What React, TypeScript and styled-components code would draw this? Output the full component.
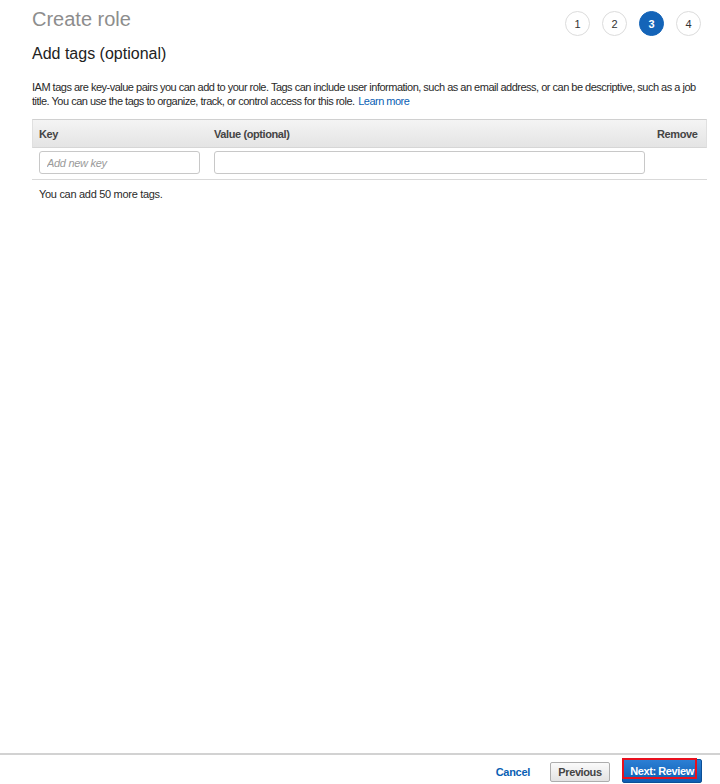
import React from "react";
import styled, { createGlobalStyle } from "styled-components";

const Global = createGlobalStyle`
  html, body { margin: 0; padding: 0; background: #fff; }
  body { font-family: "Liberation Sans", Arial, sans-serif; color: #333; }
  * { box-sizing: border-box; }
`;

const Page = styled.div`
  display: flex;
  flex-direction: column;
  min-height: 784px;
`;

const Main = styled.main`
  flex: 1;
  padding: 0 13px 0 32px;
`;

const HeaderRow = styled.div`
  display: flex;
  justify-content: space-between;
  align-items: flex-start;
`;

const Title = styled.h1`
  margin: 0;
  padding-top: 7px;
  font-size: 20px;
  line-height: 24px;
  font-weight: 400;
  color: #8d8d8d;
`;

const Steps = styled.ol`
  display: flex;
  gap: 12px;
  list-style: none;
  margin: 11px 6px 0 0;
  padding: 0;
`;

const Step = styled.li<{ $active?: boolean }>`
  width: 25px;
  height: 25px;
  border-radius: 50%;
  display: flex;
  align-items: center;
  justify-content: center;
  font-size: 11px;
  font-weight: ${(p) => (p.$active ? 700 : 400)};
  color: ${(p) => (p.$active ? "#fff" : "#333")};
  background: ${(p) => (p.$active ? "#1464b8" : "#fff")};
  border: 1px solid ${(p) => (p.$active ? "#1464b8" : "#dcdcdc")};
`;

const Subtitle = styled.h2`
  margin: 8px 0 0;
  font-size: 16px;
  line-height: 20px;
  font-weight: 400;
  color: #222;
`;

const Intro = styled.p`
  margin: 16px 0 0;
  font-size: 11px;
  line-height: 14px;
  letter-spacing: -0.5px;
  color: #2a2a2a;
`;

const Link = styled.a`
  color: #0b5fb4;
  text-decoration: none;
  margin-left: 1px;
`;

const Table = styled.div`
  margin-top: 11px;
  border-bottom: 1px solid #d9d9d9;
`;

const Grid = styled.div`
  display: grid;
  grid-template-columns: 175px 1fr 55px;
`;

const Head = styled(Grid)`
  height: 29px;
  align-items: center;
  background: linear-gradient(#f4f4f4, #e4e4e4);
  border-top: 1px solid #d0d0d0;
  border-left: 1px solid #e0e0e0;
  border-right: 1px solid #e0e0e0;
  border-bottom: 1px solid #d6d6d6;
`;

const HeadCell = styled.div<{ $right?: boolean }>`
  padding: 0 ${(p) => (p.$right ? "9px" : "7px")} 0 6px;
  text-align: ${(p) => (p.$right ? "right" : "left")};
  font-size: 11px;
  font-weight: 700;
  letter-spacing: -0.4px;
  color: #444;
`;

const Row = styled(Grid)`
  padding: 3px 0 5px;
`;

const Cell = styled.div`
  padding: 0 7px;
`;

const Input = styled.input`
  display: block;
  width: 100%;
  height: 23px;
  border: 1px solid #c8c8c8;
  border-radius: 3px;
  padding: 0 7px;
  font-family: "Liberation Sans", Arial, sans-serif;
  font-size: 11px;
  letter-spacing: -0.3px;
  color: #333;
  outline: none;
  &::placeholder {
    color: #9a9a9a;
    font-style: italic;
  }
`;

const Note = styled.p`
  margin: 7px 0 0 7px;
  font-size: 11px;
  line-height: 14px;
  letter-spacing: -0.3px;
  color: #2a2a2a;
`;

const Footer = styled.footer`
  display: flex;
  justify-content: flex-end;
  align-items: center;
  gap: 12px;
  height: 31px;
  padding: 0 18px 0 0;
  border-top: 2px solid #d2d2d2;
`;

const Cancel = styled.a`
  font-size: 11px;
  font-weight: 700;
  letter-spacing: -0.3px;
  color: #0b5fb4;
  margin-right: 8px;
  margin-top: 5px;
`;

const Button = styled.button<{ $primary?: boolean }>`
  position: relative;
  font-family: "Liberation Sans", Arial, sans-serif;
  font-size: 11px;
  font-weight: 700;
  letter-spacing: -0.4px;
  border-radius: 2px;
  cursor: pointer;
  height: ${(p) => (p.$primary ? "24px" : "20px")};
  width: ${(p) => (p.$primary ? "80px" : "60px")};
  padding: 0;
  margin-top: ${(p) => (p.$primary ? "3px" : "5px")};
  color: ${(p) => (p.$primary ? "#fff" : "#444")};
  background: ${(p) =>
    p.$primary ? "linear-gradient(#2c7fd4, #0d5eb3)" : "linear-gradient(#fafafa, #e3e3e3)"};
  border: 1px solid ${(p) => (p.$primary ? "#0c4f96" : "#adadad")};
`;

const Highlight = styled.span`
  position: absolute;
  left: -1px;
  top: -2px;
  width: 75px;
  height: 21px;
  border: 2px solid #e8101e;
  pointer-events: none;
`;

export default function App() {
  return (
    <Page>
      <Global />
      <Main>
        <HeaderRow>
          <Title>Create role</Title>
          <Steps>
            <Step>1</Step>
            <Step>2</Step>
            <Step $active>3</Step>
            <Step>4</Step>
          </Steps>
        </HeaderRow>
        <Subtitle>Add tags (optional)</Subtitle>
        <Intro>
          IAM tags are key-value pairs you can add to your role. Tags can include user information, such as an
          email address, or can be descriptive, such as a job title. You can use the tags to organize, track, or
          control access for this role. <Link href="#">Learn more</Link>
        </Intro>
        <Table>
          <Head>
            <HeadCell>Key</HeadCell>
            <HeadCell>Value (optional)</HeadCell>
            <HeadCell $right>Remove</HeadCell>
          </Head>
          <Row>
            <Cell>
              <Input placeholder="Add new key" />
            </Cell>
            <Cell>
              <Input />
            </Cell>
            <Cell />
          </Row>
        </Table>
        <Note>You can add 50 more tags.</Note>
      </Main>
      <Footer>
        <Cancel>Cancel</Cancel>
        <Button>Previous</Button>
        <Button $primary>
          Next: Review
          <Highlight />
        </Button>
      </Footer>
    </Page>
  );
}
